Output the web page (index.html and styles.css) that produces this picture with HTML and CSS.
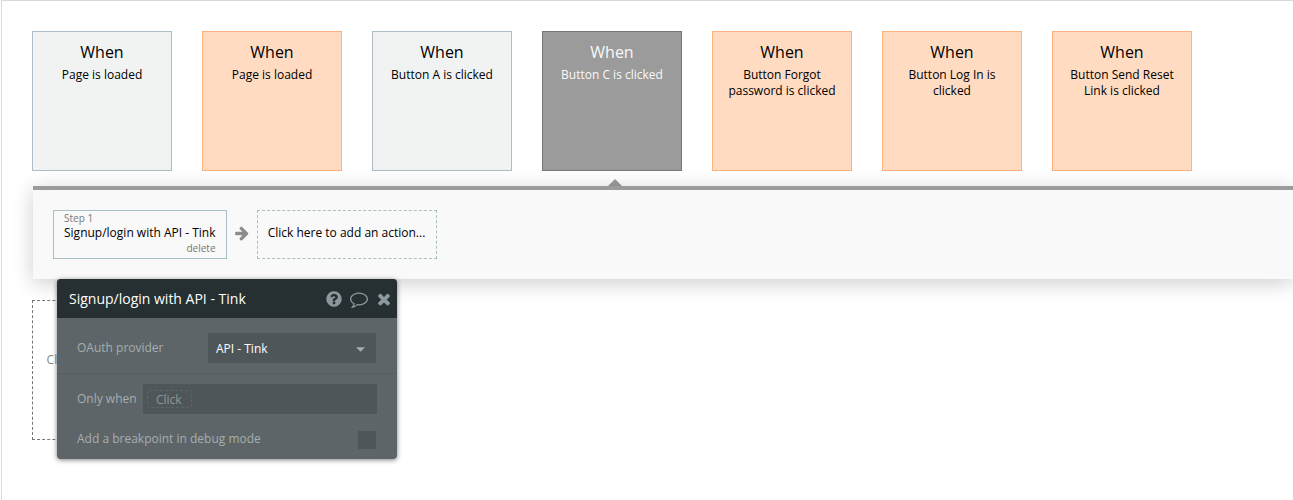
FILE: index.html
```html
<!DOCTYPE html>
<html lang="en">

<head>
  <title>Workflow</title>
  <meta charset="UTF-8">
  <link rel="stylesheet" href="styles.css">
</head>

<body>
  <div class="workflow">
    <div class="events">
      <button type="button" class="event"><span class="when">When</span><span class="desc">Page is loaded</span></button>
      <button type="button" class="event orange"><span class="when">When</span><span class="desc">Page is loaded</span></button>
      <button type="button" class="event"><span class="when">When</span><span class="desc">Button A is clicked</span></button>
      <button type="button" class="event selected"><span class="when">When</span><span class="desc">Button C is clicked</span></button>
      <button type="button" class="event orange"><span class="when">When</span><span class="desc">Button Forgot password is clicked</span></button>
      <button type="button" class="event orange"><span class="when">When</span><span class="desc">Button Log In is clicked</span></button>
      <button type="button" class="event orange"><span class="when">When</span><span class="desc">Button Send Reset Link is clicked</span></button>
    </div>

    <div class="actions">
      <div class="step">
        <span class="step-num">Step 1</span>
        <span class="step-name">Signup/login with API - Tink</span>
        <button type="button" class="delete">delete</button>
      </div>
      <svg class="arrow" viewBox="0 0 1792 1792"><path d="M1600 960q0 54-37 91l-651 651q-39 37-91 37-51 0-90-37l-75-75q-38-38-38-91t38-91l293-293h-704q-52 0-84.500-37.500t-32.500-90.500v-128q0-53 32.500-90.500t84.500-37.500h704l-293-294q-38-36-38-90t38-90l75-75q38-38 90-38 53 0 91 38l651 651q37 35 37 90z"/></svg>
      <button type="button" class="add-action">Click here to add an action...</button>

      <!-- property editor -->
      <form class="editor">
        <div class="editor-head">
          <span class="editor-title">Signup/login with API - Tink</span>
          <button type="button" class="icon" aria-label="Help">
            <svg viewBox="0 0 1792 1792"><path d="M1024 1376v-192q0-14-9-23t-23-9h-192q-14 0-23 9t-9 23v192q0 14 9 23t23 9h192q14 0 23-9t9-23zm256-672q0-88-55.500-163t-138.500-116-170-41q-243 0-371 213-15 24 8 42l132 100q7 6 19 6 16 0 25-12 53-68 86-92 34-24 86-24 48 0 85.500 26t37.500 59q0 38-20 61t-68 45q-63 28-115.500 86.500t-52.500 125.500v36q0 14 9 23t23 9h192q14 0 23-9t9-23q0-19 21.500-49.500t54.500-49.500q32-18 49-28.500t46-35 44.500-48 28-60.500 12.500-81zm384 192q0 209-103 385.500t-279.500 279.500-385.500 103-385.500-103-279.500-279.500-103-385.500 103-385.500 279.500-279.500 385.500-103 385.500 103 279.500 279.500 103 385.500z"/></svg>
          </button>
          <button type="button" class="icon" aria-label="Comment">
            <svg viewBox="0 0 1792 1792"><path d="M896 384q-204 0-381.500 69.500t-282 187.500-104.500 255q0 112 71.500 213.500t201.500 175.500l87 50-27 96q-24 91-70 172 152-63 275-171l43-38 57 6q69 8 130 8 204 0 381.500-69.500t282-187.500 104.500-255-104.500-255-282-187.500-381.500-69.500zm896 512q0 174-120 321.500t-326 233-450 85.500q-70 0-145-8-198 175-460 242-49 14-114 22h-5q-15 0-27-10.500t-16-27.500v-1q-3-4-.5-12t2-10 4.500-9.500l6-9 7-8.500 8-9q7-8 31-34.500t34.500-38 31-39.500 32.500-51 27-59 26-76q-157-89-247.500-220t-90.500-281q0-174 120-321.500t326-233 450-85.500 450 85.500 326 233 120 321.500z"/></svg>
          </button>
          <button type="button" class="icon" aria-label="Close">
            <svg viewBox="0 0 1792 1792"><path d="M1490 1322q0 40-28 68l-136 136q-28 28-68 28t-68-28l-294-294-294 294q-28 28-68 28t-68-28l-136-136q-28-28-28-68t28-68l294-294-294-294q-28-28-28-68t28-68l136-136q28-28 68-28t68 28l294 294 294-294q28-28 68-28t68 28l136 136q28 28 28 68t-28 68l-294 294 294 294q28 28 28 68z"/></svg>
          </button>
        </div>
        <div class="row provider">
          <label for="provider">OAuth provider</label>
          <div class="select">
            <select id="provider">
              <option>API - Tink</option>
            </select>
            <svg class="caret" viewBox="0 0 10 5"><path d="M0 0h10L5 5z"/></svg>
          </div>
        </div>
        <div class="row condition">
          <label for="only">Only when</label>
          <div class="expression"><input id="only" type="text" placeholder="Click"></div>
        </div>
        <div class="row breakpoint">
          <label for="debug">Add a breakpoint in debug mode</label>
          <input id="debug" type="checkbox">
        </div>
      </form>
    </div>

    <button type="button" class="new-event">Click here to add an event...</button>
  </div>
</body>

</html>
```
FILE: styles.css
```css
* {
  box-sizing: border-box;
}

body {
  margin: 0;
  background: #fff;
  font: 12px/16px "Open Sans", sans-serif;
  color: #000;
}

button,
input,
select {
  margin: 0;
  font: inherit;
  color: inherit;
}

.workflow {
  min-height: 100vh;
  margin-left: 1px;
  padding: 30px 0 30px 30px;
  border-top: 1px solid #d9d9d9;
  border-left: 1px solid #d9d9d9;
  overflow: hidden;
}

.events {
  display: flex;
  gap: 30px;
}

.event {
  position: relative;
  display: flex;
  flex: none;
  flex-direction: column;
  align-items: center;
  justify-content: flex-start;
  gap: 4px;
  width: 140px;
  height: 140px;
  padding: 9px 10px;
  border: 1px solid #aebec6;
  background: #f0f3f2;
}

.when {
  font-size: 16px;
  line-height: 22px;
}

.orange {
  border-color: #ffb180;
  background: #ffdbc2;
}

.selected {
  border-color: #777;
  background: #9b9b9b;
  color: #f9f9f9;
}

/* pointer to the opened workflow */
.selected::after {
  content: "";
  position: absolute;
  top: 147px;
  left: 65px;
  border: 7px solid transparent;
  border-top: 0;
  border-bottom-color: #9b9b9b;
}

.actions {
  position: relative;
  display: flex;
  align-items: center;
  margin: 15px 0 21px 1px;
  padding: 20px;
  border-top: 4px solid #9b9b9b;
  background: #f9f9f9;
  box-shadow: 0 4px 20px rgba(0, 0, 0, 0.2);
}

.step {
  display: flex;
  flex-direction: column;
  padding: 0 10px 3px;
  border: 1px solid #a9bfc8;
}

.step-num,
.delete {
  font-size: 10px;
  line-height: 14px;
  color: #777;
}

.delete {
  align-self: flex-end;
  padding: 0;
  border: 0;
  background: none;
}

.arrow {
  width: 16px;
  height: 16px;
  margin: 0 7px 4px;
  fill: #8c8c8c;
}

.add-action {
  align-self: stretch;
  width: 180px;
  padding: 0 0 4px;
  border: 1px dashed #a9bfc8;
  background: none;
}

.new-event {
  display: block;
  width: 140px;
  height: 140px;
  padding: 0 12px 4px;
  border: 1px dashed #777;
  background: none;
  color: #888;
}

.editor {
  position: absolute;
  z-index: 1;
  top: 100%;
  left: 24px;
  width: 340px;
  border-radius: 4px;
  background: #5d6568;
  color: #a6adaf;
  box-shadow: 0 1px 5px rgba(0, 0, 0, 0.5);
}

.editor-head {
  display: flex;
  align-items: center;
  gap: 7px;
  height: 39px;
  padding: 0 4px 0 12px;
  border-radius: 4px 4px 0 0;
  background: #262f32;
}

.editor-title {
  flex: 1;
  font-size: 14px;
  line-height: 20px;
  color: #fff;
}

.icon {
  display: flex;
  padding: 0;
  border: 0;
  background: none;
}

.icon svg {
  width: 18px;
  height: 18px;
  fill: #8b989e;
}

.row {
  display: flex;
  align-items: center;
  justify-content: space-between;
  padding: 0 20px;
}

.provider {
  padding: 15px 21px 10px 20px;
  border-bottom: 1px solid #555d60;
}

.select {
  position: relative;
  width: 168px;
}

.select select {
  display: block;
  width: 100%;
  height: 30px;
  padding: 2px 8px 0;
  border: 0;
  border-radius: 0;
  background: #4e5659;
  color: #fff;
  appearance: none;
}

.caret {
  position: absolute;
  top: 14px;
  right: 11px;
  width: 9px;
  height: 5px;
  fill: #a6adaf;
  pointer-events: none;
}

.condition {
  padding-top: 10px;
}

.expression {
  width: 234px;
  height: 30px;
  padding: 6px 4px;
  background: #4e5659;
}

.expression input {
  display: block;
  width: 45px;
  height: 18px;
  padding: 0 8px;
  border: 1px dashed #5d6568;
  border-radius: 3px;
  background: none;
}

.expression input::placeholder {
  color: #929698;
}

.breakpoint {
  align-items: flex-start;
  padding: 17px 21px 10px 20px;
}

.breakpoint input {
  width: 18px;
  height: 18px;
  background: #4e5659;
  appearance: none;
}
```
